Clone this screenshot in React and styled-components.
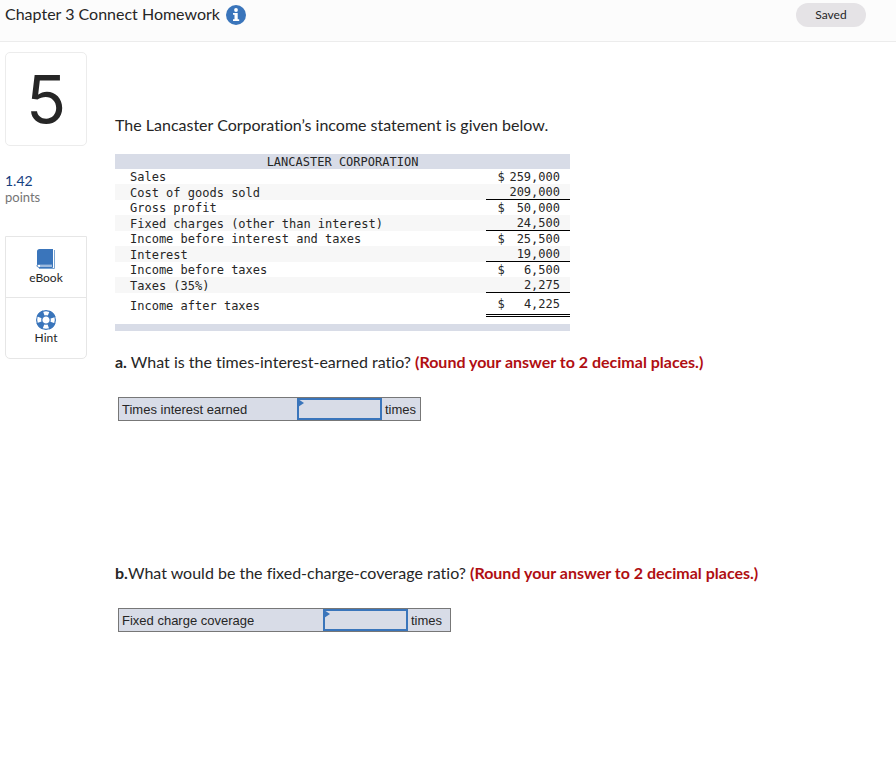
import React from "react";
import styled, { createGlobalStyle } from "styled-components";

const rows = [
  { label: "Sales", dollar: true, amount: "259,000" },
  { label: "Cost of goods sold", amount: "209,000", line: true },
  { label: "Gross profit", dollar: true, amount: "50,000" },
  { label: "Fixed charges (other than interest)", amount: "24,500", line: true },
  { label: "Income before interest and taxes", dollar: true, amount: "25,500" },
  { label: "Interest", amount: "19,000", line: true },
  { label: "Income before taxes", dollar: true, amount: "6,500" },
  { label: "Taxes (35%)", amount: "2,275", line: true },
  { label: "Income after taxes", dollar: true, amount: "4,225", total: true },
];

const InfoIcon = () => (
  <svg width="20" height="20" viewBox="0 0 20 20" aria-hidden="true">
    <circle cx="10" cy="10" r="10" fill="#3a75bb" />
    <circle cx="10" cy="5" r="1.9" fill="#fff" />
    <path d="M7 8h4.700v6.200h1.500V16H7v-1.800h1.500V9.800H7z" fill="#fff" />
  </svg>
);

const BookIcon = () => (
  <svg width="20" height="22" viewBox="0 0 20 22" aria-hidden="true">
    <path d="M3.500 1H16v15H3.500C2 16 1 17 1 18V3.500C1 2 2 1 3.500 1z" fill="#3a75bb" />
    <path
      d="M16.500 1V19.500H4C.3 19.500.3 16.500 3 16.300H16.500"
      fill="none"
      stroke="#3a75bb"
      strokeWidth="1"
    />
    <path d="M4 18h12" stroke="#3a75bb" strokeWidth="1" />
    <path d="M3 20.500h15.500V2" fill="none" stroke="#7ba5d3" strokeWidth="1" />
  </svg>
);

const RingIcon = () => (
  <svg width="20" height="20" viewBox="0 0 20 20" aria-hidden="true">
    <circle cx="10" cy="10" r="9.4" fill="#fff" stroke="#3a75bb" strokeWidth="1.2" />
    <circle
      cx="10"
      cy="10"
      r="7"
      fill="none"
      stroke="#3a75bb"
      strokeWidth="6"
      strokeDasharray="6 4.996"
      strokeDashoffset="-2.5"
    />
    <circle cx="10" cy="10" r="4.200" fill="#fff" stroke="#3a75bb" strokeWidth="1.200" />
  </svg>
);

const Answer = ({ id, label, labelWidth, unitWidth }) => (
  <AnswerRow>
    <AnswerLabel htmlFor={id} $width={labelWidth}>
      {label}
    </AnswerLabel>
    <InputWrap>
      <AnswerInput id={id} type="text" />
    </InputWrap>
    <Unit $width={unitWidth}>times</Unit>
  </AnswerRow>
);

const App = () => {
  return (
    <>
      <GlobalStyle />
      <Header>
        <Title>Chapter 3 Connect Homework</Title>
        <InfoButton type="button" aria-label="Assignment information">
          <InfoIcon />
        </InfoButton>
        <Saved>Saved</Saved>
      </Header>
      <Page>
        <Sidebar>
          <QuestionNumber>5</QuestionNumber>
          <Points>
            <strong>1.42</strong>
            <span>points</span>
          </Points>
          <Tools>
            <Tool type="button">
              <BookIcon />
              eBook
            </Tool>
            <Tool type="button">
              <RingIcon />
              Hint
            </Tool>
          </Tools>
        </Sidebar>
        <Main>
          <Text>The Lancaster Corporation’s income statement is given below.</Text>
          <Statement>
            <thead>
              <tr>
                <th colSpan="3">LANCASTER CORPORATION</th>
              </tr>
            </thead>
            <tbody>
              {rows.map((row) => (
                <Row key={row.label} $line={row.line} $total={row.total}>
                  <td>{row.label}</td>
                  <Dollar>{row.dollar && "$"}</Dollar>
                  <Amount>{row.amount}</Amount>
                </Row>
              ))}
            </tbody>
          </Statement>
          <Question>
            <Text>
              <b>a.</b> What is the times-interest-earned ratio?{" "}
              <Note>(Round your answer to 2 decimal places.)</Note>
            </Text>
            <Answer
              id="times-interest"
              label="Times interest earned"
              labelWidth={178}
              unitWidth={38}
            />
          </Question>
          <Question>
            <Text>
              <b>b.</b>What would be the fixed-charge-coverage ratio?{" "}
              <Note>(Round your answer to 2 decimal places.)</Note>
            </Text>
            <Answer
              id="fixed-charge"
              label="Fixed charge coverage"
              labelWidth={204}
              unitWidth={42}
            />
          </Question>
        </Main>
      </Page>
    </>
  );
};

//Styled Components
const GlobalStyle = createGlobalStyle`
  * {
    box-sizing: border-box;
  }
  body {
    margin: 0;
    background: #fff;
    color: #262626;
    font-family: Lato, "Open Sans", sans-serif;
    font-variant-ligatures: none;
  }
  button {
    font-family: inherit;
    color: inherit;
    cursor: pointer;
  }
`;

const Header = styled.header`
  display: flex;
  align-items: flex-start;
  gap: 6px;
  height: 42px;
  padding: 3px 30px 0 5px;
  background: #fcfcfc;
  border-bottom: 1px solid #ececec;
`;

const Title = styled.h1`
  margin: 0;
  font-size: 16px;
  font-weight: 400;
  line-height: 22px;
`;

const InfoButton = styled.button`
  display: flex;
  margin-top: 2px;
  padding: 0;
  border: 0;
  background: none;
`;

const Saved = styled.div`
  width: 70px;
  margin-left: auto;
  border-radius: 12px;
  background: #e5e3e6;
  font-size: 12px;
  line-height: 24px;
  text-align: center;
`;

const Page = styled.div`
  display: flex;
  gap: 28px;
  padding: 10px 5px;
`;

const Sidebar = styled.aside`
  flex: none;
  width: 82px;
`;

const QuestionNumber = styled.div`
  height: 94px;
  border: 1px solid #ececec;
  border-radius: 5px;
  font-family: Inter, sans-serif;
  font-size: 66px;
  line-height: 92px;
  text-align: center;
`;

const Points = styled.div`
  display: flex;
  flex-direction: column;
  margin: 26px 0 30px;
  font-size: 13px;
  line-height: 17px;
  color: #757575;
  strong {
    font-size: 14px;
    font-weight: 400;
    color: #16407f;
  }
`;

const Tools = styled.div`
  border: 1px solid #e6e6e6;
  border-radius: 0 0 5px 5px;
`;

const Tool = styled.button`
  display: flex;
  flex-direction: column;
  align-items: center;
  justify-content: center;
  width: 100%;
  height: 60px;
  padding: 0;
  border: 0;
  background: none;
  font-size: 12px;
  line-height: 16px;
  & + & {
    height: 61px;
    border-top: 1px solid #e6e6e6;
  }
`;

const Main = styled.main`
  flex: 1;
  padding-top: 62px;
`;

const Text = styled.p`
  margin: 0;
  font-size: 16px;
  line-height: 22px;
`;

const Statement = styled.table`
  width: 455px;
  margin-top: 18px;
  border-collapse: separate;
  border-spacing: 0;
  border-bottom: 7px solid #d8dce7;
  padding-bottom: 7px;
  font-family: "DejaVu Sans Mono", monospace;
  font-size: 12px;
  line-height: 14px;
  th {
    padding: 1px 0 0;
    background: #d8dce7;
    font-weight: 400;
  }
  td {
    padding: 1px 0 0;
  }
`;

const Dollar = styled.td`
  width: 23px;
`;

const Amount = styled.td`
  width: 60px;
  text-align: right;
`;

const Row = styled.tr`
  height: ${({ $total }) => ($total ? "24px" : "auto")};
  background: ${({ $line }) => ($line ? "#f7f7f7" : "#fff")};
  td:first-child {
    padding-left: 15px;
  }
  ${Dollar}, ${Amount} {
    border-bottom: ${({ $line, $total }) =>
      $total ? "3px double #000" : $line ? "1px solid #000" : "0"};
  }
  ${Dollar} {
    padding-left: 11px;
  }
  ${Amount} {
    padding-right: 10px;
  }
`;

const Question = styled.section`
  min-height: 191px;
  margin-top: 20px;
`;

const Note = styled.b`
  color: #b00e12;
`;

const AnswerRow = styled.div`
  display: inline-flex;
  height: 24px;
  margin: 24px 0 0 3px;
  border: 1px solid #777;
  background: #d8dce7;
  font-family: "Liberation Sans", sans-serif;
  font-size: 13px;
  line-height: 24px;
`;

const AnswerLabel = styled.label`
  width: ${({ $width }) => $width}px;
  padding-left: 3px;
`;

const InputWrap = styled.div`
  position: relative;
  &::before {
    content: "";
    position: absolute;
    top: 1px;
    left: 1px;
    border-left: 6px solid #3a75bb;
    border-top: 4px solid transparent;
    border-bottom: 4px solid transparent;
  }
`;

const AnswerInput = styled.input`
  display: block;
  width: 85px;
  height: 22px;
  padding: 0 8px;
  border: 2px solid #3a75bb;
  outline: 0;
  background: transparent;
  font: inherit;
`;

const Unit = styled.span`
  width: ${({ $width }) => $width}px;
  padding-left: 3px;
`;

export default App;
